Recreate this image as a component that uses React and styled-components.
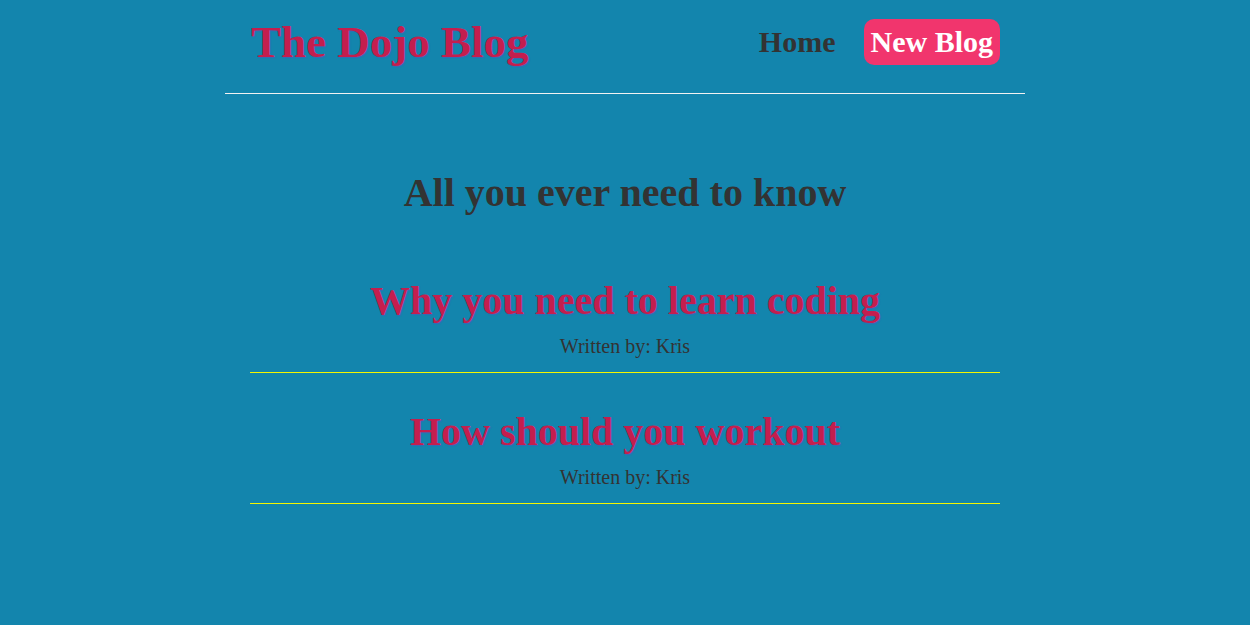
import React from 'react';
import styled, { createGlobalStyle } from 'styled-components';

const GlobalStyle = createGlobalStyle`
    *{
        box-sizing:border-box;
    }
    body {
        margin:0;
        background:#1385ad;
        font-family:"Liberation Serif", "Times New Roman", serif;
        color:#333;
    }
`;

const blogs = [
    { id: 1, title: 'Why you need to learn coding', author: 'Kris' },
    { id: 2, title: 'How should you workout', author: 'Kris' },
];

function App() {
    return (
        <>
            <GlobalStyle />
            <Navbar>
                <Brand>The Dojo Blog</Brand>
                <Links>
                    <NavLink href="#">Home</NavLink>
                    <NavLink href="#" $primary>New Blog</NavLink>
                </Links>
            </Navbar>
            <Content>
                <Heading>All you ever need to know</Heading>
                {blogs.map(blog => (
                    <Preview key={blog.id}>
                        <PostTitle>{blog.title}</PostTitle>
                        <Author>Written by: {blog.author}</Author>
                    </Preview>
                ))}
            </Content>
        </>
    );
}

export default App;

const Navbar = styled.nav`
    max-width:800px;
    margin:0 auto;
    padding:16px 25px 25px 26px;
    display:flex;
    align-items:center;
    border-bottom:1px solid #f2f2f2;
`;
const Brand = styled.h1`
    margin:0;
    font-size:45px;
    font-weight:bold;
    color:#c41e4e;
    text-shadow:1px 1px 1px rgba(90,80,190,0.55);
`;
const Links = styled.div`
    margin-left:auto;
    display:flex;
    align-items:center;
    gap:28px;
`;
const NavLink = styled.a`
    text-decoration:none;
    font-size:30px;
    font-weight:bold;
    color:${props => props.$primary ? '#fff' : '#333'};
    background:${props => props.$primary ? '#f1356d' : 'transparent'};
    padding:${props => props.$primary ? '6px 7px' : '0'};
    border-radius:10px;
`;
const Content = styled.div`
    max-width:750px;
    margin:0 auto;
    padding-top:75px;
    text-align:center;
`;
const Heading = styled.h2`
    margin:0 0 26px;
    font-size:40px;
    font-weight:bold;
    color:#333;
`;
const Preview = styled.div`
    padding:35px 0 14px;
    border-bottom:1px solid #f5f500;
`;
const PostTitle = styled.h2`
    margin:0 0 11px;
    font-size:40px;
    font-weight:bold;
    color:#c41e4e;
    text-shadow:1px 1px 1px rgba(90,80,190,0.55);
`;
const Author = styled.p`
    margin:0;
    font-size:20px;
    color:#333;
`;
